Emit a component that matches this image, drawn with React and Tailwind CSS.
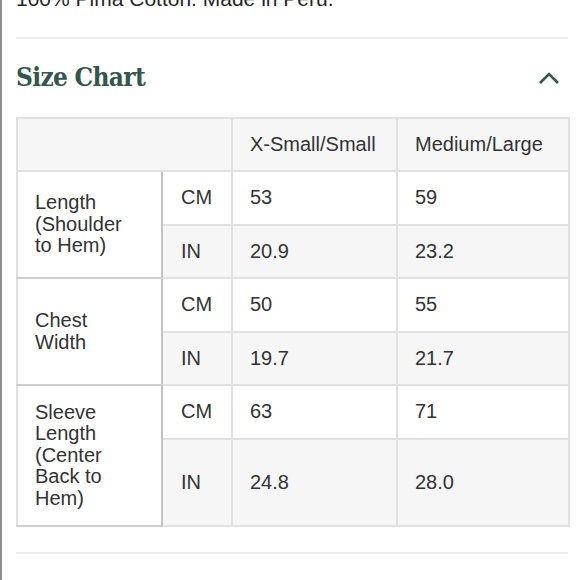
import React from "react";

const rows = [
  { label: ["Length", "(Shoulder", "to Hem)"], cm: ["53", "59"], inch: ["20.9", "23.2"], inH: "h-[53px]" },
  { label: ["Chest", "Width"], cm: ["50", "55"], inch: ["19.7", "21.7"], inH: "h-[53px]" },
  { label: ["Sleeve", "Length", "(Center", "Back to", "Hem)"], cm: ["63", "71"], inch: ["24.8", "28.0"], inH: "h-[87px]" },
];

export default function App() {
  const cell = "border-2 border-[#e1e1e1] pl-[17px] align-middle";
  return (
    <div className="w-[580px] h-[580px] overflow-hidden bg-white border-l-2 border-[#8c8c8c] text-[#333] font-['Liberation_Sans',Arial,sans-serif]">
      <div className="ml-[14px] w-[552px]">
        <p className="mt-[-13px] text-[21px] leading-[24px] text-[#262626]">100% Pima Cotton. Made in Peru.</p>
        <div className="mt-[26px] h-[2px] bg-[#ececec]" />
        <div className="flex items-center justify-between h-[78px]">
          <h2 className="font-['DejaVu_Serif_Condensed','DejaVu_Serif',serif] font-bold text-[26px] tracking-[-0.7px] text-[#35564e] mb-[2px]">
            Size Chart
          </h2>
          <svg width="22" height="14" viewBox="0 0 22 14" className="mr-[8px]">
            <path d="M2 12 L11 3 L20 12" fill="none" stroke="#35564e" strokeWidth="2.6" />
          </svg>
        </div>
        <table className="w-[552px] table-fixed border-collapse text-[20px] leading-[21.5px]">
          <colgroup>
            <col className="w-[145px]" />
            <col className="w-[70px]" />
            <col className="w-[165px]" />
            <col className="w-[172px]" />
          </colgroup>
          <tbody>
            <tr className="h-[53px] bg-[#f6f6f6]">
              <td colSpan={2} className={cell}></td>
              <td className={cell}>X-Small/Small</td>
              <td className={cell}>Medium/Large</td>
            </tr>
            {rows.map((r, i) => (
              <React.Fragment key={i}>
                <tr className="h-[54px] bg-white">
                  <td rowSpan={2} className="border-2 border-[#e1e1e1] border-r-[#c2c2c2] border-b-[#cfcfcf] pl-[17px] align-middle bg-white">
                    {r.label.map((l, j) => (
                      <div key={j}>{l}</div>
                    ))}
                  </td>
                  <td className={cell + " pl-[18px]"}>CM</td>
                  <td className={cell}>{r.cm[0]}</td>
                  <td className={cell}>{r.cm[1]}</td>
                </tr>
                <tr className={r.inH + " bg-[#f6f6f6]"}>
                  <td className={cell + " pl-[18px]"}>IN</td>
                  <td className={cell}>{r.inch[0]}</td>
                  <td className={cell}>{r.inch[1]}</td>
                </tr>
              </React.Fragment>
            ))}
          </tbody>
        </table>
        <div className="mt-[25px] h-[2px] bg-[#ececec]" />
      </div>
    </div>
  );
}
